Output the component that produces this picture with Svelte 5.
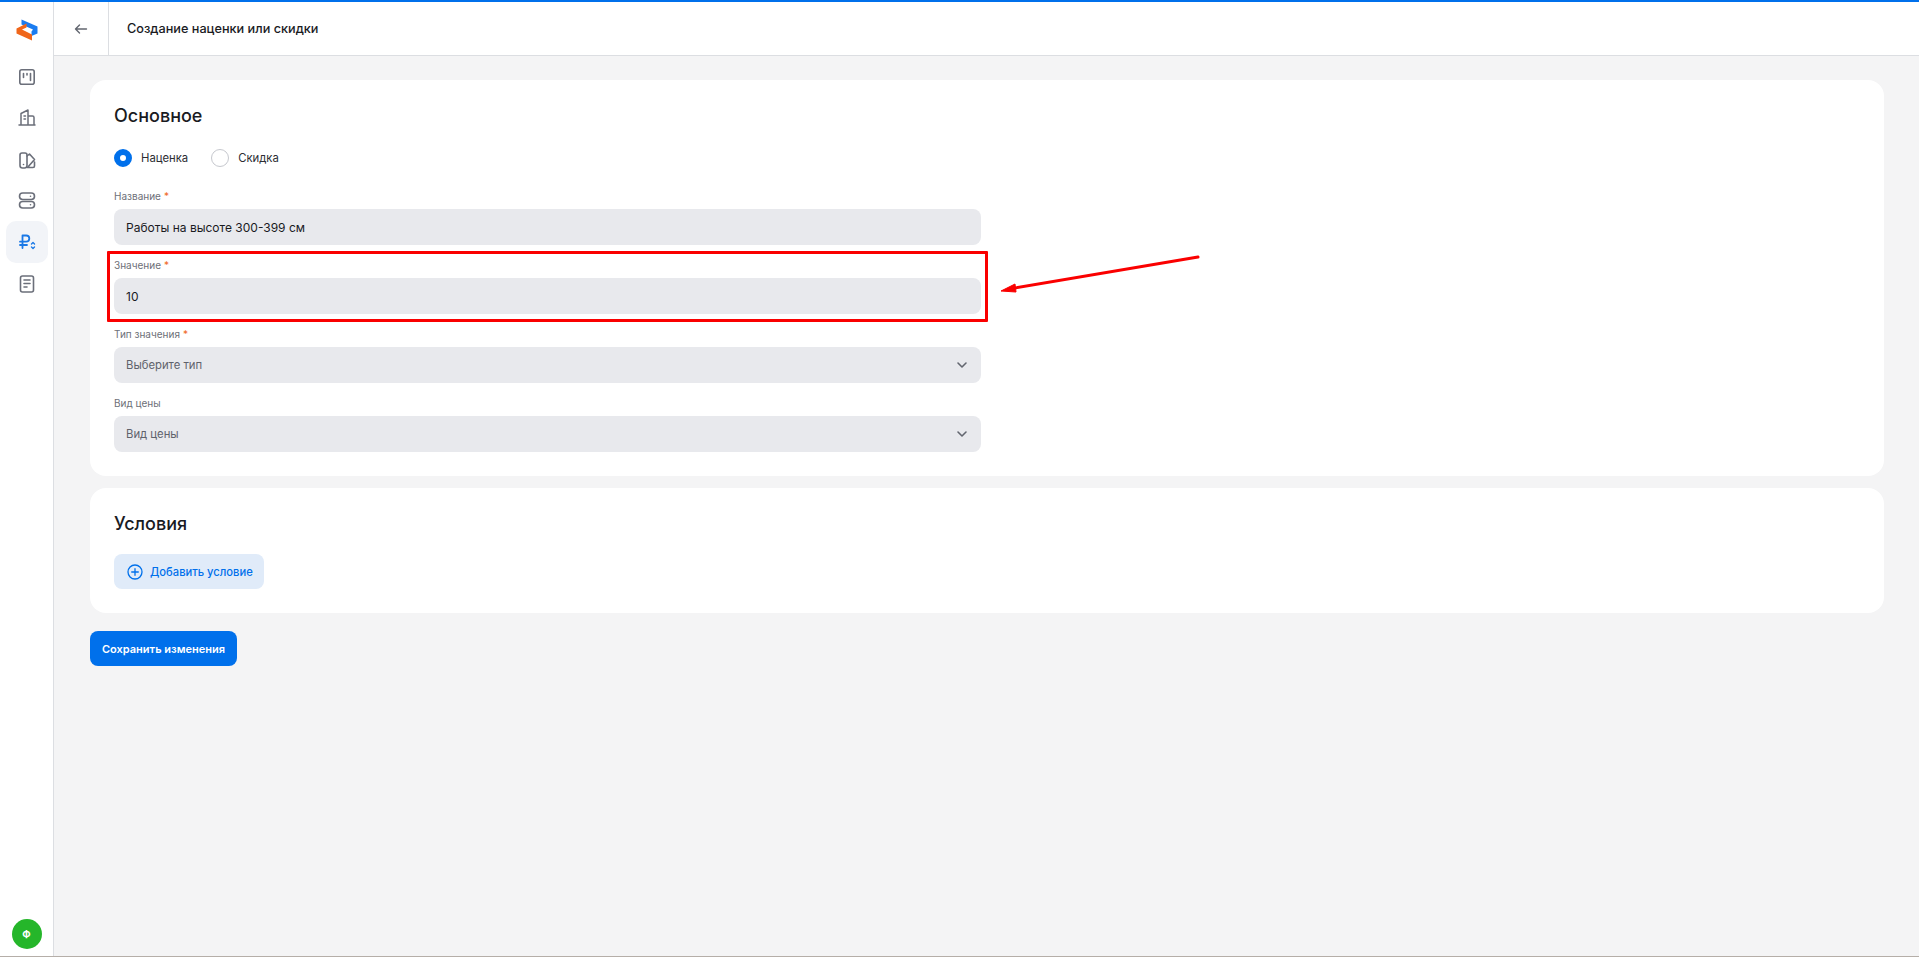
<script lang="ts">
  let kind = $state('markup');

  const fields = [
    { label: 'Название', required: true, value: 'Работы на высоте 300-399 см' },
    { label: 'Значение', required: true, value: '10' },
    { label: 'Тип значения', required: true, placeholder: 'Выберите тип', select: true },
    { label: 'Вид цены', required: false, placeholder: 'Вид цены', select: true },
  ];
</script>

<div class="app">
  <aside class="sidebar">
    <svg class="logo" width="22" height="22" viewBox="0 0 22 22">
      <path d="M5.500 0.500 L21.500 7.500 V14.500 L15.500 17 V12.500 L17 10.500 L5.500 5.500 Z" fill="#1a7cf0" />
      <path d="M16 21.500 L0.500 14.500 V9.500 L10.500 4.500 V8.500 L6 10.500 L16 15.500 Z" fill="#f0661a" />
    </svg>
    <nav class="nav">
      <div class="nav-item">
        <svg width="20" height="20" viewBox="0 0 20 20" fill="none" stroke="#6b6f7a" stroke-width="1.6" stroke-linecap="round">
          <rect x="2.800" y="2.800" width="14.400" height="14.400" rx="2" />
          <path d="M6.500 6.500v4M10 6.500v1.500M13.500 6.500v7" />
        </svg>
      </div>
      <div class="nav-item">
        <svg width="20" height="20" viewBox="0 0 20 20" fill="none" stroke="#6b6f7a" stroke-width="1.5" stroke-linecap="round" stroke-linejoin="round">
          <path d="M2 17h16M4 17V5.500l7-3.500v15M11 8h4.500a1.500 1.500 0 0 1 1.500 1.500V17M7 8h1.500M7 11h1.500" />
        </svg>
      </div>
      <div class="nav-item">
        <svg width="20" height="20" viewBox="0 0 20 20" fill="none" stroke="#6b6f7a" stroke-width="1.6" stroke-linecap="round" stroke-linejoin="round">
          <path d="M3 5a2 2 0 0 1 2-2h3a2 2 0 0 1 2 2v10.500a2.500 2.500 0 0 1-2.500 2.500h-2A2.500 2.500 0 0 1 3 15.500Z" />
          <path d="M10 6l2.500-2 5 5.500-7 8H16a1.500 1.500 0 0 0 1.500-1.500V12" />
          <path d="M6.500 14.500h.01" />
        </svg>
      </div>
      <div class="nav-item">
        <svg width="20" height="20" viewBox="0 0 20 20" fill="none" stroke="#6b6f7a" stroke-width="1.6" stroke-linecap="round">
          <rect x="2.500" y="2" width="15" height="6.500" rx="3.200" />
          <rect x="2.500" y="10.500" width="15" height="6.500" rx="3.200" />
          <path d="M13.500 5.200h.01M13.500 13.700h.01" />
        </svg>
      </div>
      <div class="nav-item active">
        <svg width="20" height="20" viewBox="0 0 20 20" fill="none" stroke="#1a78e6" stroke-width="1.800" stroke-linecap="round" stroke-linejoin="round">
          <path d="M5.500 16V3.500h3.700a3.100 3.100 0 0 1 0 6.200H3M3 13h7" />
          <path d="M14.500 12l1.500-1.400 1.500 1.400M14.500 15l1.500 1.400 1.500-1.400" stroke-width="1.400" />
        </svg>
      </div>
      <div class="nav-item">
        <svg width="20" height="20" viewBox="0 0 20 20" fill="none" stroke="#6b6f7a" stroke-width="1.6" stroke-linecap="round">
          <rect x="3.500" y="2" width="13" height="16" rx="2" />
          <path d="M7 6h6M7 9.500h6M7 13h3" />
        </svg>
      </div>
    </nav>
    <div class="avatar">Ф</div>
  </aside>

  <div class="content">
    <header class="header">
      <button class="back" aria-label="Назад">
        <svg width="16" height="16" viewBox="0 0 16 16" fill="none" stroke="#62666f" stroke-width="1.400" stroke-linecap="round" stroke-linejoin="round">
          <path d="M13.500 8H2.500M6.500 4l-4 4 4 4" />
        </svg>
      </button>
      <h1>Создание наценки или скидки</h1>
    </header>

    <main class="main">
      <section class="card">
        <h2>Основное</h2>
        <div class="radios">
          <button class="radio" class:on={kind === 'markup'} onclick={() => (kind = 'markup')}>
            <span class="dot"></span>Наценка
          </button>
          <button class="radio" class:on={kind === 'discount'} onclick={() => (kind = 'discount')}>
            <span class="dot"></span>Скидка
          </button>
        </div>
        <div class="fields">
          {#each fields as f}
            <div class="field">
              <span class="label">{f.label}{#if f.required}<em>*</em>{/if}</span>
              <div class="input" class:muted={f.select}>
                <span>{f.value ?? f.placeholder}</span>
                {#if f.select}
                  <svg width="14" height="14" viewBox="0 0 14 14" fill="none" stroke="#62666f" stroke-width="1.600" stroke-linecap="round" stroke-linejoin="round">
                    <path d="M3 5l4 4 4-4" />
                  </svg>
                {/if}
              </div>
            </div>
          {/each}
        </div>
      </section>

      <section class="card">
        <h2>Условия</h2>
        <button class="add">
          <svg width="16" height="16" viewBox="0 0 16 16" fill="none" stroke="#0070eb" stroke-width="1.300" stroke-linecap="round">
            <circle cx="8" cy="8" r="7" />
            <path d="M8 4.700v6.600M4.700 8h6.600" />
          </svg>
          Добавить условие
        </button>
      </section>

      <button class="save">Сохранить изменения</button>
    </main>
  </div>

  <div class="highlight"></div>
  <svg class="arrow" width="210" height="44" viewBox="0 0 210 44">
    <path d="M207 3 L18 35" stroke="#fa0000" stroke-width="3" stroke-linecap="round" />
    <path d="M10 37 L24 30 L25 38 Z" fill="#fa0000" stroke="#fa0000" />
  </svg>
</div>

<style>
  :global(body) {
    margin: 0;
    font-family: Inter, "Noto Sans", sans-serif;
    color: #1a1b1f;
  }

  .app {
    position: relative;
    display: flex;
    height: 957px;
    box-sizing: border-box;
    border-top: 2px solid #0070eb;
    border-bottom: 1px solid #b5aea8;
    background: #f4f4f5;
    overflow: hidden;
  }

  .sidebar {
    width: 53px;
    flex-shrink: 0;
    display: flex;
    flex-direction: column;
    align-items: center;
    background: #fff;
    border-right: 1px solid #dcdee2;
  }

  .logo {
    margin-top: 17px;
    height: 22px;
    flex-shrink: 0;
  }

  .nav {
    margin-top: 15px;
    display: flex;
    flex-direction: column;
  }

  .nav-item {
    width: 42px;
    height: 41.500px;
    display: flex;
    align-items: center;
    justify-content: center;
    border-radius: 10px;
  }

  .nav-item.active {
    margin-top: -1px;
    height: 42px;
    background: #f2f4f8;
  }

  .avatar {
    margin-top: auto;
    margin-bottom: 7px;
    width: 30px;
    height: 30px;
    border-radius: 50%;
    background: #25b62a;
    color: #fff;
    font-size: 10px;
    font-weight: 700;
    display: flex;
    align-items: center;
    justify-content: center;
  }

  .content {
    flex: 1;
    min-width: 0;
    display: flex;
    flex-direction: column;
  }

  .header {
    height: 53px;
    flex-shrink: 0;
    display: flex;
    align-items: center;
    background: #fff;
    border-bottom: 1px solid #dcdee2;
  }

  .back {
    width: 55px;
    height: 100%;
    padding: 0;
    background: none;
    border: none;
    border-right: 1px solid #dcdee2;
    display: flex;
    align-items: center;
    justify-content: center;
  }

  h1 {
    margin: 0 0 0 18px;
    font-size: 12.700px;
    font-weight: 500;
  }

  .main {
    padding: 24px 35px 0 36px;
    display: flex;
    flex-direction: column;
    align-items: flex-start;
    gap: 12px;
  }

  .card {
    align-self: stretch;
    background: #fff;
    border-radius: 16px;
    padding: 24px;
  }

  h2 {
    margin: 0;
    font-size: 18px;
    line-height: 24px;
    font-weight: 500;
  }

  .radios {
    margin-top: 21px;
    display: flex;
    gap: 23px;
  }

  .radio {
    padding: 0;
    background: none;
    border: none;
    font: inherit;
    font-size: 11.300px;
    color: #2c2d33;
    display: flex;
    align-items: center;
    gap: 9px;
    height: 18px;
  }

  .dot {
    width: 18px;
    height: 18px;
    box-sizing: border-box;
    border-radius: 50%;
    border: 1px solid #c6c8ce;
  }

  .radio.on .dot {
    border: 6px solid #0070eb;
    background: #fff;
  }

  .fields {
    margin-top: 22px;
    width: 867px;
    display: flex;
    flex-direction: column;
    gap: 13px;
  }

  .field {
    display: flex;
    flex-direction: column;
    gap: 6px;
  }

  .label {
    font-size: 10px;
    line-height: 14px;
    color: #6d7078;
    height: 14px;
  }

  .label em {
    margin-left: 3px;
    font-style: normal;
    color: #f0661a;
  }

  .input {
    height: 36px;
    box-sizing: border-box;
    padding: 0 12px;
    border-radius: 8px;
    background: #e8e9ed;
    font-size: 12px;
    display: flex;
    align-items: center;
    justify-content: space-between;
    color: #1a1b1f;
  }

  .input.muted {
    font-size: 11.300px;
    color: #5f626b;
  }

  .add {
    margin-top: 18px;
    height: 35px;
    padding: 0 11px 0 13px;
    display: flex;
    align-items: center;
    gap: 7px;
    background: #e0ebf9;
    border: none;
    border-radius: 8px;
    font: inherit;
    font-size: 11.200px;
    font-weight: 500;
    color: #0070eb;
  }

  .save {
    margin-top: 6px;
    height: 35px;
    padding: 0 12px;
    background: #0070eb;
    border: none;
    border-radius: 8px;
    font: inherit;
    font-size: 11px;
    font-weight: 600;
    color: #fff;
  }

  /* screenshot annotation, sits over the form */
  .highlight {
    position: absolute;
    left: 107px;
    top: 249px;
    width: 881px;
    height: 71px;
    box-sizing: border-box;
    border: 3.500px solid #fa0000;
    border-radius: 1px;
  }

  .arrow {
    position: absolute;
    left: 991px;
    top: 252px;
  }
</style>
